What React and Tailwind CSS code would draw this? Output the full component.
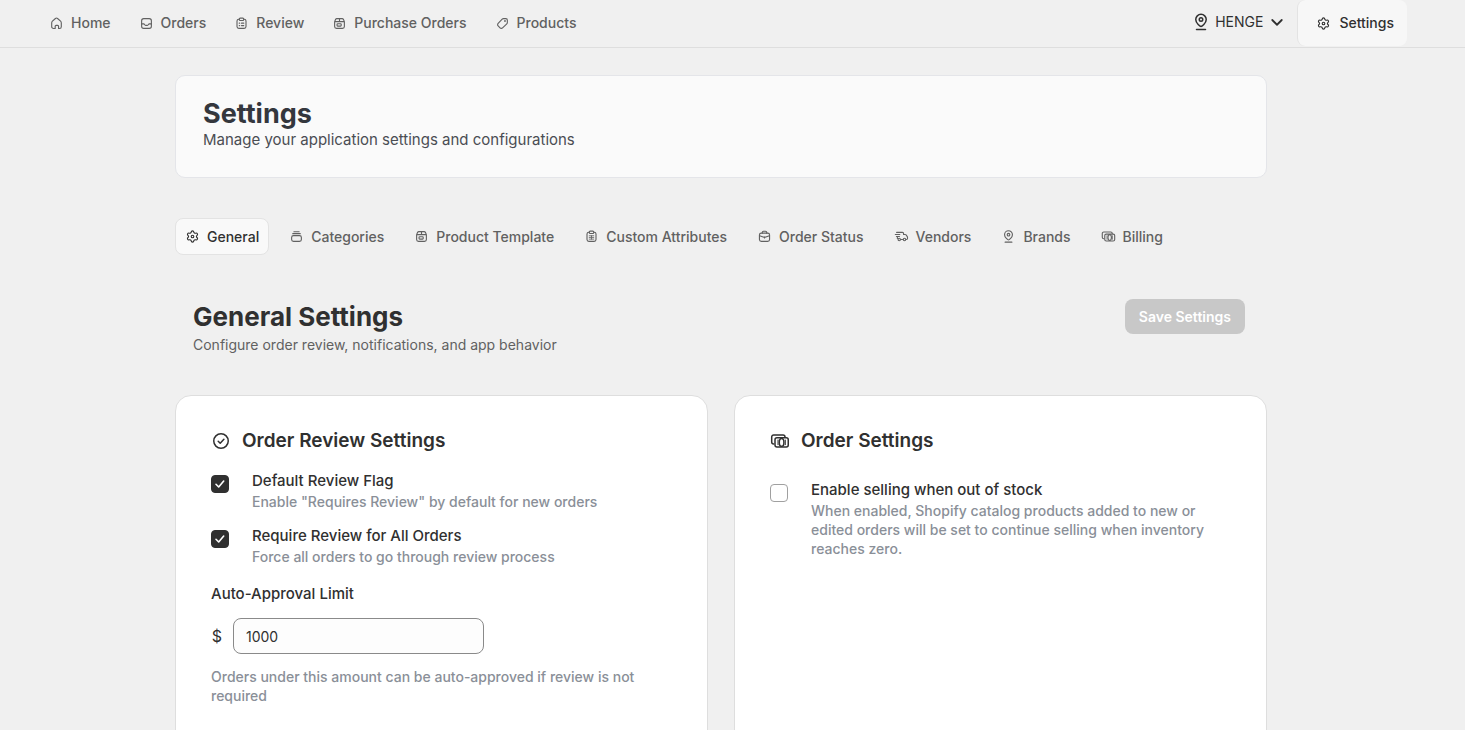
import React, { useState } from "react";

const GLYPHS = {
  home: (
    <path d="M3.6 9.2c0-.9.35-1.7 1-2.3l4-3.6a2.1 2.1 0 0 1 2.8 0l4 3.6c.65.6 1 1.4 1 2.3v5a2.4 2.4 0 0 1-2.4 2.4h-1.25v-2.9a1.25 1.25 0 0 0-1.25-1.25h-2a1.25 1.25 0 0 0-1.25 1.25v2.9H6a2.4 2.4 0 0 1-2.4-2.4z" />
  ),
  inbox: (
    <>
      <rect x="3.5" y="3.5" width="13" height="13" rx="2.75" />
      <path d="M3.5 10.5h2.7c.5 0 .9.25 1.15.7l.3.6c.25.45.65.7 1.15.7h2.4c.5 0 .9-.25 1.15-.7l.3-.6c.25-.45.65-.7 1.15-.7h2.7" />
    </>
  ),
  clipboard: (
    <>
      <path d="M7 4.25h-.5A2.5 2.5 0 0 0 4 6.75V14a2.5 2.5 0 0 0 2.5 2.5h7A2.5 2.5 0 0 0 16 14V6.75a2.5 2.5 0 0 0-2.5-2.5H13" />
      <rect x="7" y="2.75" width="6" height="3.25" rx="1.25" />
      <path d="M7 9.5h.6M10 9.5h3M7 12.75h.6M10 12.75h3" />
    </>
  ),
  checklist: (
    <>
      <path d="M7 4.25h-.5A2.5 2.5 0 0 0 4 6.75V14a2.5 2.5 0 0 0 2.5 2.5h7A2.5 2.5 0 0 0 16 14V6.75a2.5 2.5 0 0 0-2.5-2.5H13" />
      <rect x="7" y="2.75" width="6" height="3.25" rx="1.25" />
      <path d="M7 9h6M7 11.25h6M7 13.5h6M10 9v4.5" strokeWidth="1.1" />
    </>
  ),
  product: (
    <>
      <path d="M3.5 7.5V14A2.5 2.5 0 0 0 6 16.5h8a2.5 2.5 0 0 0 2.5-2.5V7.5l-1.2-2.7a2 2 0 0 0-1.8-1.3h-7a2 2 0 0 0-1.8 1.3zM3.5 7.5h13M10 3.5v4" />
      <rect x="6.75" y="10.25" width="5.5" height="3.25" rx=".8" />
    </>
  ),
  tag: (
    <>
      <path d="M9.6 4.3a2.5 2.5 0 0 1 1.75-.75h3.1a2 2 0 0 1 2 2v3.1c0 .65-.25 1.3-.75 1.75l-5.6 5.4a2.4 2.4 0 0 1-3.4 0l-2.5-2.5a2.4 2.4 0 0 1 0-3.4z" />
      <circle cx="13.3" cy="6.7" r=".5" />
    </>
  ),
  gear: (
    <g transform="translate(1 1) scale(.75)" strokeWidth="2">
      <path d="M9.671 4.136a2.34 2.34 0 0 1 4.659 0 2.34 2.34 0 0 0 3.319 1.915 2.34 2.34 0 0 1 2.33 4.033 2.34 2.34 0 0 0 0 3.831 2.34 2.34 0 0 1-2.33 4.033 2.34 2.34 0 0 0-3.319 1.915 2.34 2.34 0 0 1-4.659 0 2.34 2.34 0 0 0-3.32-1.915 2.34 2.34 0 0 1-2.33-4.033 2.34 2.34 0 0 0 0-3.831A2.34 2.34 0 0 1 6.35 6.051a2.34 2.34 0 0 0 3.319-1.915" />
      <circle cx="12" cy="12" r="2.3" />
    </g>
  ),
  stack: (
    <>
      <rect x="3.5" y="8.75" width="13" height="7.75" rx="2.5" />
      <path d="M5 6.2h10M6.5 3.6h7" />
    </>
  ),
  bag: (
    <>
      <rect x="3.25" y="5.5" width="13.5" height="11" rx="2.5" />
      <path d="M7 5.5v-.75A1.75 1.75 0 0 1 8.75 3h2.5A1.75 1.75 0 0 1 13 4.75v.75M3.5 9l4.7 1.6c1.2.4 2.4.4 3.6 0L16.5 9M10 10.5V12" />
    </>
  ),
  truck: (
    <>
      <path d="M3.5 4.5h7.75a1.5 1.5 0 0 1 1.5 1.5v1.25h2.1c.5 0 .95.25 1.25.65l1.6 2.2c.2.3.3.6.3.9v1.5a1.5 1.5 0 0 1-1.5 1.5M11.5 14h-2M1.75 7.25h6M3.25 10h4M4.5 10v2.5" />
      <circle cx="7" cy="14" r="1.6" />
      <circle cx="14" cy="14" r="1.6" />
    </>
  ),
  pin: (
    <>
      <path d="M10 14.6c.5 0 5.25-3.1 5.25-7a5.25 5.25 0 0 0-10.5 0c0 3.9 4.75 7 5.25 7z" />
      <circle cx="10" cy="7.5" r="1.75" />
      <path d="M5.5 17.5h9" />
    </>
  ),
  bills: (
    <>
      <path d="M3.7 13a2 2 0 0 1-2-2V6a2 2 0 0 1 2-2H13a2 2 0 0 1 2 2" />
      <rect x="5" y="6.75" width="13.25" height="9.25" rx="2" />
      <ellipse cx="11.6" cy="11.4" rx="2.3" ry="3.9" />
      <path d="M8 9v4.7M15.3 9v4.7" strokeWidth="1" />
    </>
  ),
  checkCircle: (
    <>
      <circle cx="10" cy="10" r="7.25" />
      <path d="m7.2 10.2 2 2 3.7-4" />
    </>
  ),
  chevron: <path d="m5.25 8 4.75 4.75L14.75 8" strokeWidth="1.8" />,
};

function Icon({ name, className = "size-[15px]" }) {
  return (
    <svg
      viewBox="0 0 20 20"
      className={`shrink-0 ${className}`}
      fill="none"
      stroke="currentColor"
      strokeWidth="1.5"
      strokeLinecap="round"
      strokeLinejoin="round"
      aria-hidden="true"
    >
      {GLYPHS[name]}
    </svg>
  );
}

const NAV = [
  ["home", "Home"],
  ["inbox", "Orders"],
  ["clipboard", "Review"],
  ["product", "Purchase Orders"],
  ["tag", "Products"],
];

const TABS = [
  ["gear", "General"],
  ["stack", "Categories"],
  ["product", "Product Template"],
  ["checklist", "Custom Attributes"],
  ["bag", "Order Status"],
  ["truck", "Vendors"],
  ["pin", "Brands"],
  ["bills", "Billing"],
];

function CheckRow({ id, label, help, initial }) {
  const [checked, setChecked] = useState(initial);
  return (
    <div className="flex items-start gap-[23px]">
      <span className="mt-[5px] grid shrink-0 place-items-center">
        <input
          id={id}
          type="checkbox"
          checked={checked}
          onChange={(e) => setChecked(e.target.checked)}
          aria-describedby={`${id}-help`}
          className="peer col-start-1 row-start-1 size-[18px] appearance-none rounded border border-[#a0a0a0] bg-white checked:border-[#303030] checked:bg-[#303030]"
        />
        <svg
          viewBox="0 0 18 18"
          className="pointer-events-none invisible col-start-1 row-start-1 size-[18px] peer-checked:visible"
          fill="none"
          stroke="#fff"
          strokeWidth="1.6"
          strokeLinecap="round"
          strokeLinejoin="round"
          aria-hidden="true"
        >
          <path d="m5 9.3 2.7 2.7 5-6" />
        </svg>
      </span>
      <div>
        <label htmlFor={id} className="block text-[15px] leading-[22px] font-medium">
          {label}
        </label>
        <p id={`${id}-help`} className="text-sm leading-[19px] font-medium text-[#8a8f98]">
          {help}
        </p>
      </div>
    </div>
  );
}

function Card({ icon, title, children }) {
  return (
    <section className="min-w-0 flex-1 rounded-2xl border border-[#dedede] bg-white px-[35px] pt-8 pb-12">
      <h3 className="flex items-center gap-[11px] text-[19px] leading-[26px] font-semibold">
        <Icon name={icon} className="size-5" />
        {title}
      </h3>
      {children}
    </section>
  );
}

export default function App() {
  const [limit, setLimit] = useState("1000");
  return (
    <div className="min-h-screen bg-[#f0f0f0] font-['Inter',sans-serif] text-[#303030]">
      <header className="flex h-12 items-start justify-between border-b border-[#dedede] pr-[58px] pl-[49px]">
        <nav className="flex h-[46px] items-center gap-7 text-sm font-medium text-[#616161]">
          {NAV.map(([icon, label]) => (
            <a key={label} href="#" className="flex items-center gap-[7px]">
              <Icon name={icon} />
              {label}
            </a>
          ))}
        </nav>
        <div className="flex h-[46px] items-stretch text-sm">
          <button type="button" className="flex items-center gap-1 pr-2.5 pb-0.5">
            <Icon name="pin" className="size-5" />
            HENGE
            <Icon name="chevron" className="size-5" />
          </button>
          <a
            href="#"
            className="flex items-center gap-2 rounded-lg border-l border-[#e3e3e3] bg-[#f7f7f7] pr-[13px] pl-[18px] font-medium"
          >
            <Icon name="gear" />
            Settings
          </a>
        </div>
      </header>

      <main className="pt-[27px] pr-[23px]">
        <div className="mx-auto max-w-[1092px]">
          <div className="rounded-[10px] border border-[#e4e5e9] bg-[#fafafa] px-[27px] pt-[22px] pb-[27px]">
            <h1 className="text-[27px] leading-8 font-bold text-[#34373d]">Settings</h1>
            <p className="text-[15px] leading-5 text-[#4a4d53]">
              Manage your application settings and configurations
            </p>
          </div>

          <nav className="mt-10 flex gap-2.5 text-sm font-medium text-[#616161]">
            {TABS.map(([icon, label], i) => (
              <a
                key={label}
                href="#"
                aria-current={i === 0 ? "page" : undefined}
                className={`flex h-[37px] items-center gap-[7px] rounded-lg border px-[9px] ${
                  i === 0 ? "border-[#e3e3e3] bg-[#f9f9f9] text-[#303030]" : "border-transparent"
                }`}
              >
                <Icon name={icon} />
                {label}
              </a>
            ))}
          </nav>

          <div className="mt-11 flex items-start justify-between pr-[22px] pl-[18px]">
            <div>
              <h2 className="text-[26px] leading-9 font-bold">General Settings</h2>
              <p className="text-sm leading-5 text-[#616161]">
                Configure order review, notifications, and app behavior
              </p>
            </div>
            <button
              type="button"
              disabled
              className="h-[35px] rounded-lg bg-[#c8c8c8] px-3.5 text-sm font-semibold text-white"
            >
              Save Settings
            </button>
          </div>

          <div className="mt-10 flex gap-[26px]">
            <Card icon="checkCircle" title="Order Review Settings">
              <div className="mt-4 flex flex-col gap-3.5">
                <CheckRow
                  id="default-review"
                  label="Default Review Flag"
                  help={'Enable "Requires Review" by default for new orders'}
                  initial
                />
                <CheckRow
                  id="require-review"
                  label="Require Review for All Orders"
                  help="Force all orders to go through review process"
                  initial
                />
              </div>
              <label htmlFor="limit" className="mt-[17px] block text-[15px] leading-[22px] font-medium">
                Auto-Approval Limit
              </label>
              <div className="mt-[13px] flex items-center gap-2.5">
                <span className="w-3 text-center text-base">$</span>
                <input
                  id="limit"
                  type="text"
                  inputMode="decimal"
                  value={limit}
                  onChange={(e) => setLimit(e.target.value)}
                  aria-describedby="limit-help"
                  className="h-9 w-[251px] rounded-lg border border-[#8a8a8a] bg-[#fdfdfd] px-3 text-sm"
                />
              </div>
              <p id="limit-help" className="mt-[13px] text-sm leading-[19px] font-medium text-[#8a8f98]">
                Orders under this amount can be auto-approved if review is not required
              </p>
            </Card>
            <Card icon="bills" title="Order Settings">
              <div className="mt-[25px]">
                <CheckRow
                  id="oversell"
                  label="Enable selling when out of stock"
                  help="When enabled, Shopify catalog products added to new or edited orders will be set to continue selling when inventory reaches zero."
                  initial={false}
                />
              </div>
            </Card>
          </div>
        </div>
      </main>
    </div>
  );
}
